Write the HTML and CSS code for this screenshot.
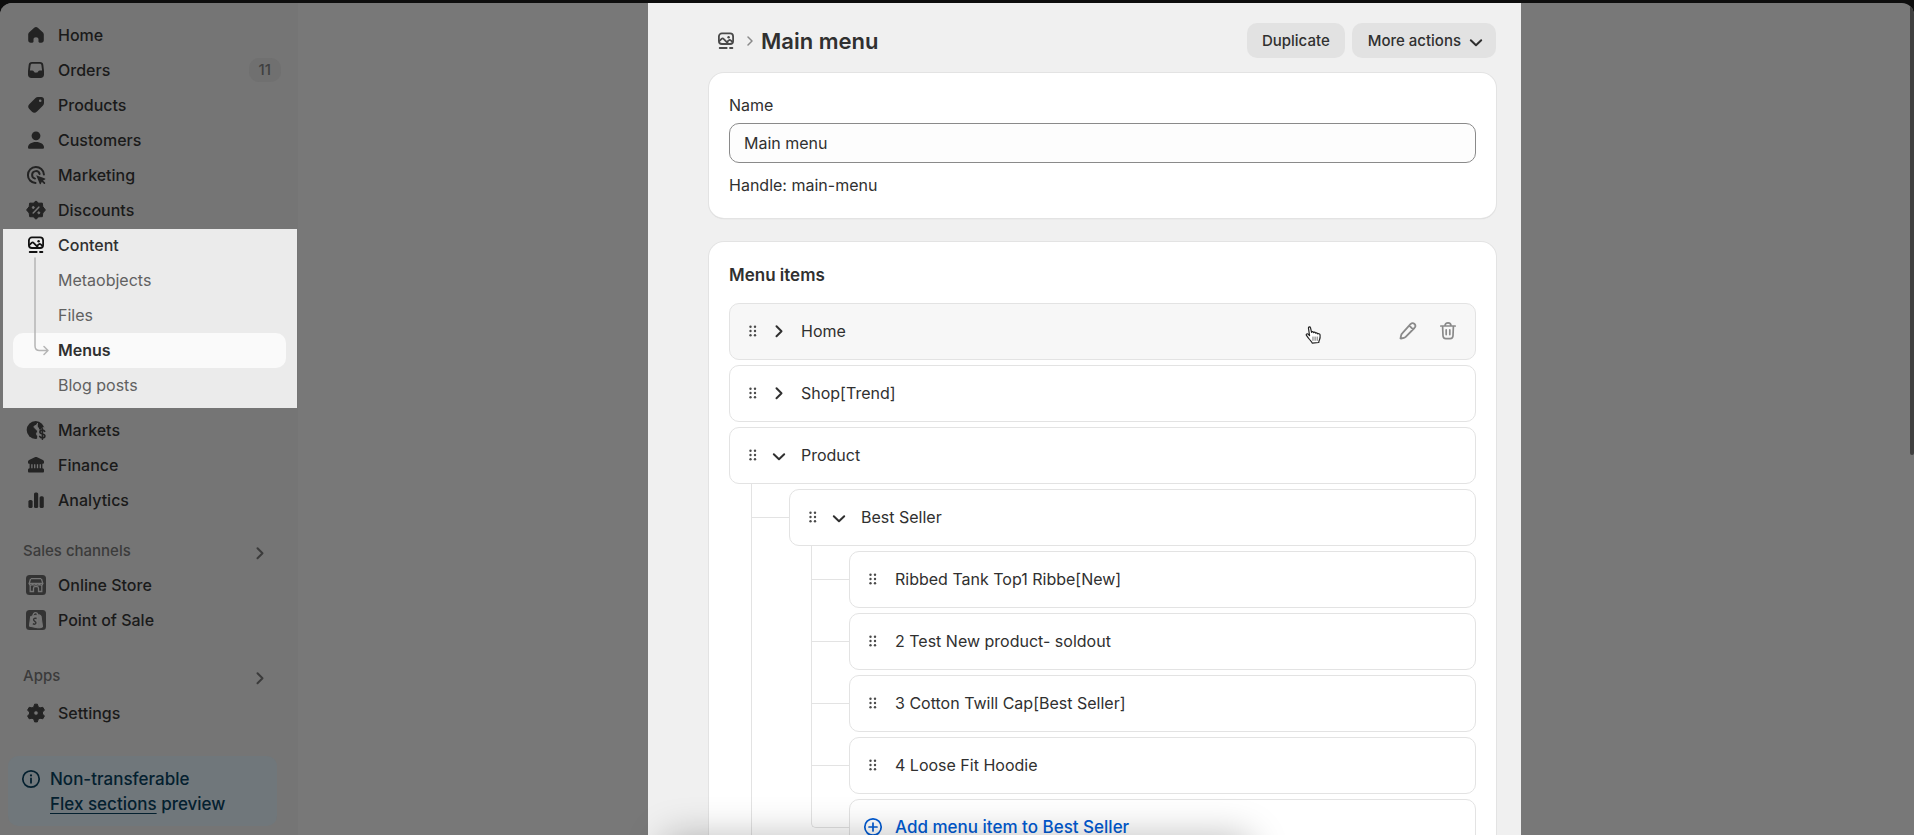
FILE: index.html
```html
<!DOCTYPE html>
<html lang="en">
<head>
  <meta charset="UTF-8">
  <meta name="viewport" content="width=device-width, initial-scale=1">
  <title>Main menu</title>
  <link rel="stylesheet" href="styles.css">
</head>
<body>
<svg class="sprite" aria-hidden="true">
  <symbol id="content" viewBox="0 0 20 20">
    <rect x="2.9" y="2.4" width="14.2" height="10.6" rx="3" fill="none" stroke="currentColor" stroke-width="1.8"/>
    <path d="M3 10.5l2.6-2.7c.6-.6 1.500-.6 2 0l4.600 4.800M10.800 11l2-1.600c.6-.5 1.300-.5 1.900 0l2 1.600" fill="none" stroke="currentColor" stroke-width="1.8"/>
    <circle cx="12.600" cy="6.300" r="1.200" fill="currentColor"/>
    <path d="M3.700 17h7M14 17h2.400" fill="none" stroke="currentColor" stroke-width="1.800" stroke-linecap="round"/>
  </symbol>
  <symbol id="drag" viewBox="0 0 20 20">
    <g fill="currentColor">
      <circle cx="7.500" cy="5.700" r="1.200"/><circle cx="12" cy="5.700" r="1.200"/>
      <circle cx="7.500" cy="10" r="1.200"/><circle cx="12" cy="10" r="1.200"/>
      <circle cx="7.500" cy="14.300" r="1.200"/><circle cx="12" cy="14.300" r="1.200"/>
    </g>
  </symbol>
  <symbol id="right" viewBox="0 0 20 20">
    <path d="M7.500 5.200l5 5-5 5" fill="none" stroke="currentColor" stroke-width="2" stroke-linecap="round" stroke-linejoin="round"/>
  </symbol>
  <symbol id="down" viewBox="0 0 20 20">
    <path d="M4.800 9.300l5.200 5 5.200-5" fill="none" stroke="currentColor" stroke-width="2" stroke-linecap="round" stroke-linejoin="round"/>
  </symbol>
</svg>

<div class="page">
  <aside class="sidebar">
    <nav>
      <a href="#" class="nav-link">
        <svg viewBox="0 0 20 20"><path d="M8.200 2.800c1-1 2.600-1 3.600 0l4.900 4.500c.8.7 1.100 1.500 1.100 2.500v5.400c0 1.600-1 2.500-2.500 2.500h-1.600c-.7 0-1.200-.5-1.200-1.200v-2.300c0-1.200-1-2-2.500-2s-2.500.8-2.500 2v2.300c0 .7-.5 1.200-1.200 1.200h-1.600c-1.500 0-2.500-.9-2.500-2.500V9.800c0-1 .3-1.800 1.100-2.500z" fill="currentColor"/></svg>
        <span>Home</span>
      </a>
      <a href="#" class="nav-link">
        <svg viewBox="0 0 20 20"><path fill-rule="evenodd" d="M6 2h8c2 0 3 1 3.300 2.800l.7 6.200v3.500c0 2.200-1.300 3.500-3.500 3.500h-9C3.300 18 2 16.700 2 14.500V11l.7-6.200C3 3 4 2 6 2zm.3 1.800c-1 0-1.600.5-1.700 1.500L3.900 10.500h2.300c.8 0 1.300.4 1.700 1 .4.800 1 1.200 2.100 1.200s1.700-.4 2.100-1.200c.4-.6.9-1 1.700-1h2.300l-.7-5.200c-.1-1-.7-1.500-1.700-1.500z" fill="currentColor"/></svg>
        <span>Orders</span>
        <span class="badge">11</span>
      </a>
      <a href="#" class="nav-link">
        <svg viewBox="0 0 20 20"><path fill-rule="evenodd" d="M12 2h3.200C17 2 18 3 18 4.800V8c0 1-.3 1.800-1 2.500l-6 6c-1.700 1.700-3.500 1.700-5 .2l-2.700-2.700c-1.500-1.500-1.500-3.300.2-5l6-6C10.200 2.300 11 2 12 2zm2.200 5a1.300 1.300 0 1 0 0-2.600 1.300 1.300 0 0 0 0 2.600z" fill="currentColor"/></svg>
        <span>Products</span>
      </a>
      <a href="#" class="nav-link">
        <svg viewBox="0 0 20 20"><g fill="currentColor"><circle cx="10" cy="5.800" r="4.400"/><path d="M10 12c4.600 0 8 2.400 8 5.400 0 .8-.6 1.300-1.400 1.300H3.400c-.8 0-1.400-.5-1.400-1.300C2 14.400 5.400 12 10 12z"/></g></svg>
        <span>Customers</span>
      </a>
      <a href="#" class="nav-link">
        <svg viewBox="0 0 20 20"><g fill="none" stroke="currentColor" stroke-width="2" stroke-linecap="round"><path d="M9.500 18A8 8 0 1 1 17.900 9.500"/><path d="M9 13.600A3.800 3.800 0 1 1 13.600 9"/></g><path d="M10.200 10.200l8.800 3.400c.5.200.5.800 0 1l-2 1 2 2c.4.400.4.800 0 1.200s-.8.400-1.200 0l-2-2-1 2.100c-.2.500-.9.500-1 0z" fill="currentColor"/></svg>
        <span>Marketing</span>
      </a>
      <a href="#" class="nav-link">
        <svg viewBox="0 0 20 20"><g fill="currentColor"><path d="M10 1l2.700 2.200 3.600-.1.500 3.500L19.400 10l-2.600 3 -.5 3.700-3.600.1L10 19.200l-2.700-2.400-3.600-.1-.5-3.700L.6 10l2.600-3.400.5-3.500 3.600.1z" stroke="currentColor" stroke-linejoin="round"/></g><g class="cutout"><path d="M7.200 13l5.600-5.800" stroke-width="1.600" stroke-linecap="round"/><circle cx="7.300" cy="7.500" r="1" /><circle cx="12.800" cy="12.800" r="1"/></g></svg>
        <span>Discounts</span>
      </a>

      <div class="nav-group">
        <a href="#" class="nav-link parent">
          <svg><use href="#content"/></svg>
          <span>Content</span>
        </a>
        <div class="subnav">
          <a href="#">Metaobjects</a>
          <a href="#">Files</a>
          <a href="#" class="current">Menus</a>
          <a href="#">Blog posts</a>
          <svg class="subnav-arrow" viewBox="0 0 16 100"><path d="M2 1v88c0 3 1.500 4.500 4.500 4.500H15M11 89.500l4 4-4 4" fill="none" stroke="currentColor" stroke-width="1.500" stroke-linecap="round" stroke-linejoin="round"/></svg>
        </div>
      </div>

      <a href="#" class="nav-link">
        <svg viewBox="0 0 20 20"><circle cx="9.600" cy="10" r="8.900" fill="currentColor"/><path class="cutout" d="M11.500 3.200c-.2 1.500-1 2-2.300 2.400-1.400.5-1.500 1.500-.7 2.200l2.600 2.600c.7.700.4 1.700-.2 2.300-.7.700-.5 1.500 0 2.200l.8 1.300v3.500l7.800-2V8.800l-2-1.500-2.800 2.600c-.6.500-1.300.3-1.700-.4l-1.700-3.200c-.3-.8-.2-1.800.2-3.100z"/><path d="M18.700 11.400c-.5-.9-1.300-1.300-2.300-1.300-1.500 0-2.500.7-2.500 1.900 0 2.800 5 1.200 5 4 0 1.200-1.100 1.900-2.500 1.900-1.200 0-2.200-.5-2.700-1.500M16.400 8.700v10.500" fill="none" stroke="currentColor" stroke-width="1.600" stroke-linecap="round"/></svg>
        <span>Markets</span>
      </a>
      <a href="#" class="nav-link">
        <svg viewBox="0 0 20 20"><path d="M8.800 2.300c.8-.4 1.600-.4 2.400 0l5.700 2.600c.7.300 1.100.9 1.100 1.600v1c0 .8-.5 1.300-1.300 1.300h-.3v4.400c1 .1 1.600.8 1.600 1.800v1.300c0 .8-.5 1.200-1.200 1.200H3.200c-.7 0-1.200-.4-1.200-1.200V15c0-1 .6-1.700 1.600-1.800V8.800h-.3C2.500 8.800 2 8.300 2 7.500v-1c0-.7.400-1.300 1.100-1.600z" fill="currentColor"/><path class="cutout" d="M5.900 9.200v4M8.700 9.200v4M11.500 9.200v4M14.300 9.200v4" stroke-width="1.300"/></svg>
        <span>Finance</span>
      </a>
      <a href="#" class="nav-link">
        <svg viewBox="0 0 20 20"><g fill="currentColor"><rect x="2.400" y="10" width="4.200" height="8" rx="1.600"/><rect x="8" y="2.400" width="4.200" height="15.600" rx="1.600"/><rect x="13.600" y="6.200" width="4.200" height="11.800" rx="1.600"/></g></svg>
        <span>Analytics</span>
      </a>

      <a href="#" class="nav-heading">
        <span>Sales channels</span>
        <svg><use href="#right"/></svg>
      </a>
      <a href="#" class="nav-link">
        <svg class="app-icon" viewBox="0 0 20 20"><rect x="0" y="0" width="20" height="20" rx="3.500" fill="currentColor"/><g class="cutout"><path d="M5 3.700h10M4.600 3.700L3.200 8.400h13.600l-1.400-4.700M3.200 8.400c0 2.300 3.400 2.300 3.400 0 0 2.300 3.400 2.300 3.400 0 0 2.300 3.400 2.300 3.400 0 0 2.300 3.400 2.300 3.400 0M4.200 10.500v6h3.300v-3.300c0-1 .5-1.500 1.500-1.500h2c1 0 1.500.5 1.500 1.500v3.300h3.300v-6" class="line"/></g></svg>
        <span>Online Store</span>
      </a>
      <a href="#" class="nav-link">
        <svg class="app-icon" viewBox="0 0 20 20"><rect x="0" y="0" width="20" height="20" rx="3.500" fill="currentColor"/><path class="cutout" d="M4.600 6.500l8-1.800V18L3.400 16.200zM13.400 4.700l1.600 1 1.600 11.300-3.200 1z"/><path class="cutout line" d="M6.800 6c.3-2 1.500-3.400 2.700-3.400S11.700 3.800 11.800 5.200"/><path d="M10.600 8.500c-1.600-.7-3 0-3 1.300 0 1.500 2.300 1.500 2.300 3s-1.700 1.800-3 .9" fill="none" stroke="currentColor" stroke-width="1.400"/></svg>
        <span>Point of Sale</span>
      </a>

      <a href="#" class="nav-heading apps">
        <span>Apps</span>
        <svg><use href="#right"/></svg>
      </a>
      <a href="#" class="nav-link settings">
        <svg viewBox="0 0 20 20"><path fill-rule="evenodd" d="M8.600 1.200h2.800l.8 2.700 1.800 1 2.800-.6 1.600 2.800-1.900 2v1.900l1.900 2-1.600 2.800-2.800-.6-1.800 1-.8 2.700H8.600l-.8-2.700-1.800-1-2.800.6L1.600 13l1.900-2V9.100l-1.900-2 1.600-2.800 2.800.6 1.800-1zM10 12.300a2.300 2.300 0 1 0 0-4.600 2.300 2.300 0 0 0 0 4.600z" fill="currentColor" stroke="currentColor" stroke-linejoin="round"/></svg>
        <span>Settings</span>
      </a>
    </nav>

    <div class="notice">
      <svg viewBox="0 0 20 20"><circle cx="10" cy="10" r="8.200" fill="none" stroke="currentColor" stroke-width="1.700"/><path d="M10 9.500v4.300" stroke="currentColor" stroke-width="1.800" stroke-linecap="round"/><circle cx="10" cy="6.400" r="1.100" fill="currentColor"/></svg>
      <p>Non-transferable<br><a href="#">Flex sections</a> preview</p>
    </div>
  </aside>

  <main class="main">
    <section class="panel">
      <header class="panel-head">
        <a href="#" class="crumb" aria-label="Content"><svg><use href="#content"/></svg></a>
        <svg class="crumb-sep" viewBox="0 0 8 12"><path d="M2 2l4 4-4 4" fill="none" stroke="currentColor" stroke-width="1.500" stroke-linecap="round" stroke-linejoin="round"/></svg>
        <h1>Main menu</h1>
        <button type="button" class="btn">Duplicate</button>
        <button type="button" class="btn">More actions <svg><use href="#down"/></svg></button>
      </header>

      <div class="card name-card">
        <label for="menu-name">Name</label>
        <input type="text" id="menu-name" value="Main menu">
        <p>Handle: main-menu</p>
      </div>

      <div class="card">
        <h2>Menu items</h2>
        <ul class="items">
          <li>
            <div class="row hover">
              <svg class="drag"><use href="#drag"/></svg>
              <button type="button" class="toggle" aria-label="Expand Home"><svg><use href="#right"/></svg></button>
              <span class="label">Home</span>
              <button type="button" class="action" aria-label="Edit"><svg viewBox="0 0 20 20"><path d="M12.500 3.200c1.300-1.300 2.900-1.300 4-.2s1.100 2.700-.1 4L7.700 15.800c-.5.500-1.100.9-1.800 1l-3 .7c-.3 0-.5-.2-.4-.5l.7-2.900c.1-.7.500-1.300 1-1.800zM11.300 4.600l4 4" fill="none" stroke="currentColor" stroke-width="1.800" stroke-linejoin="round"/></svg></button>
              <button type="button" class="action" aria-label="Delete"><svg viewBox="0 0 20 20"><path d="M2.800 5h14.400M7 5c0-1.900 1.200-3.200 3-3.200S13 3.100 13 5M4.600 5.200l.4 9.600c.1 1.800 1 2.800 2.800 2.800h4.400c1.800 0 2.700-1 2.800-2.800l.4-9.600M8.200 8.800v4.800M11.800 8.800v4.800" fill="none" stroke="currentColor" stroke-width="1.700" stroke-linecap="round"/></svg></button>
              <svg class="pointer" viewBox="0 0 16 17"><path d="M3.200 1.800c0-1.100 1.700-1.400 2 0l1 4.200c.2-.9 1.700-.9 1.900.3.300-.8 1.700-.7 1.900.5.400-.7 1.600-.4 1.800.6.600-.3 2.200-.3 2.400 1 .2 1.800.2 2.900-.5 4.600-.3.800-.7 1.200-.7 2.600l-6.200.5c-.4-1.400-1.600-2.200-2.700-3.600C3.200 11.400 1.800 9.500 1.200 8.600c-.4-1 .9-1.600 1.600-1l1.500 1.500z" fill="#fff" stroke="#222" stroke-width="1.100" stroke-linejoin="round"/><path d="M7.500 10v4M9.500 10v4M11.500 10v4" stroke="#555" stroke-width=".8"/></svg>
            </div>
          </li>
          <li>
            <div class="row">
              <svg class="drag"><use href="#drag"/></svg>
              <button type="button" class="toggle" aria-label="Expand Shop"><svg><use href="#right"/></svg></button>
              <span class="label">Shop[Trend]</span>
            </div>
          </li>
          <li>
            <div class="row">
              <svg class="drag"><use href="#drag"/></svg>
              <button type="button" class="toggle" aria-label="Collapse Product"><svg><use href="#down"/></svg></button>
              <span class="label">Product</span>
            </div>
            <ul class="tree">
              <li>
                <div class="node">
                  <div class="row">
                    <svg class="drag"><use href="#drag"/></svg>
                    <button type="button" class="toggle" aria-label="Collapse Best Seller"><svg><use href="#down"/></svg></button>
                    <span class="label">Best Seller</span>
                  </div>
                  <ul class="tree">
                    <li><div class="node"><div class="row"><svg class="drag"><use href="#drag"/></svg><span class="label">Ribbed Tank Top1 Ribbe[New]</span></div></div></li>
                    <li><div class="node"><div class="row"><svg class="drag"><use href="#drag"/></svg><span class="label">2 Test New product- soldout</span></div></div></li>
                    <li><div class="node"><div class="row"><svg class="drag"><use href="#drag"/></svg><span class="label">3 Cotton Twill Cap[Best Seller]</span></div></div></li>
                    <li><div class="node"><div class="row"><svg class="drag"><use href="#drag"/></svg><span class="label">4 Loose Fit Hoodie</span></div></div></li>
                    <li class="last">
                      <div class="node">
                        <button type="button" class="row add">
                          <svg viewBox="0 0 20 20"><g fill="none" stroke="currentColor" stroke-width="1.700" stroke-linecap="round"><circle cx="10" cy="10" r="8.200"/><path d="M10 6v8M6 10h8"/></g></svg>
                          <span class="label">Add menu item to Best Seller</span>
                        </button>
                      </div>
                    </li>
                  </ul>
                </div>
              </li>
            </ul>
          </li>
        </ul>
      </div>
    </section>
  </main>
  <div class="bar-shadow"></div>
  <div class="scrollbar"></div>
</div>
</body>
</html>
```

FILE: styles.css
```css
* {
  margin: 0;
  padding: 0;
  box-sizing: border-box;
}

body {
  height: 100vh;
  padding-top: 3px;
  overflow: hidden;
  background: #0e0e0e;
  font-family: Inter, "Liberation Sans", sans-serif;
  font-size: 16px;
  line-height: 24px;
  color: #303030;
}

a {
  color: inherit;
  text-decoration: none;
}

li {
  list-style: none;
}

button,
input {
  font: inherit;
  color: inherit;
}

button {
  border: none;
  background: none;
}

svg {
  width: 20px;
  height: 20px;
  flex: none;
  display: block;
}

.sprite {
  position: absolute;
  width: 0;
  height: 0;
}

.page {
  display: flex;
  height: 100%;
  position: relative;
  overflow: hidden;
  border-radius: 12px 12px 0 0;
  background: #787878;
}

/* sidebar */
.sidebar {
  width: 298px;
  flex: none;
  padding-top: 14px;
  background: #757575;
  color: #1a1a1a;
  font-weight: 500;
}

.nav-link {
  display: flex;
  align-items: center;
  gap: 12px;
  height: 35px;
  padding: 0 17px 0 26px;
}

.nav-link svg {
  color: #232323;
}

.cutout {
  fill: #757575;
  stroke: #757575;
}

.cutout.line,
.cutout .line {
  fill: none;
  stroke-width: 1.3;
}

.nav-link .app-icon {
  color: #333;
}

.badge {
  margin-left: auto;
  padding: 0 10px;
  border-radius: 10px;
  background: #707070;
  color: #404040;
  font-size: 15px;
}

.nav-group {
  margin: 2px 1px 4px 3px;
  padding-bottom: 5px;
  background: #ebebeb;
  color: #303030;
}

.nav-group .parent {
  height: 32px;
  padding-left: 23px;
}

.nav-group .parent svg {
  color: #111;
}

.subnav {
  position: relative;
  padding: 2px 11px 0 10px;
}

.subnav a {
  display: block;
  height: 35px;
  padding-left: 45px;
  border-radius: 10px;
  line-height: 35px;
  font-weight: 400;
  color: #616161;
}

.subnav .current {
  background: #fafafa;
  color: #303030;
  font-weight: 600;
}

.subnav-arrow {
  position: absolute;
  top: -4px;
  left: 30px;
  width: 16px;
  height: 100px;
  color: #b5b5b5;
}

.nav-heading {
  display: flex;
  align-items: center;
  justify-content: space-between;
  height: 32px;
  margin-top: 18px;
  padding: 0 28px 0 23px;
  color: #3b3b3b;
  font-size: 15px;
}

.nav-heading svg {
  margin-top: 3px;
}

.nav-heading.apps {
  margin-top: 23px;
}

.settings {
  margin-top: 3px;
}

.notice {
  display: flex;
  gap: 9px;
  margin: 26px 21px 0 8px;
  padding: 11px 13px 9px;
  border-radius: 10px;
  background: #70777b;
  color: #04202f;
  font-size: 17px;
  line-height: 25px;
}

.notice svg {
  margin-top: 2px;
}

.notice a {
  text-decoration: underline;
  text-underline-offset: 3px;
}

/* main column */
.main {
  display: flex;
  flex: 1;
  justify-content: center;
  min-width: 0;
  padding-right: 43px;
}

.panel {
  width: 100%;
  max-width: 873px;
  padding: 20px 25px 0 61px;
  background: #f0f0f0;
}

.panel-head {
  display: flex;
  align-items: center;
  height: 35px;
  margin-bottom: 15px;
  padding-left: 7px;
}

.crumb {
  color: #4a4a4a;
}

.crumb-sep {
  width: 8px;
  height: 12px;
  margin: 0 7px 0 10px;
  color: #8a8a8a;
}

h1 {
  flex: 1;
  font-size: 22px;
  line-height: 30px;
  font-weight: 600;
}

.btn {
  display: flex;
  align-items: center;
  gap: 5px;
  height: 35px;
  margin-left: 7px;
  padding: 0 15px;
  border-radius: 10px;
  background: #e2e2e2;
  font-size: 15px;
  font-weight: 500;
}

.btn:last-child {
  padding: 0 10px 0 16px;
}

.card {
  margin-bottom: 24px;
  padding: 21px 20px;
  border-radius: 15px;
  background: #fff;
  box-shadow: 0 0 0 1px #e3e3e3, 0 1px 1px #c4c4c4;
}

.name-card {
  padding-top: 20px;
}

.name-card label {
  display: block;
  margin-bottom: 6px;
}

.name-card input {
  display: block;
  width: 100%;
  height: 40px;
  margin-bottom: 10px;
  padding: 0 14px;
  border: 1px solid #8a8a8a;
  border-radius: 10px;
  background: #fdfdfd;
}

h2 {
  margin-bottom: 16px;
  font-size: 17px;
  line-height: 24px;
  font-weight: 600;
}

/* menu tree */
.items > li {
  margin-bottom: 5px;
}

.row {
  display: flex;
  align-items: center;
  position: relative;
  width: 100%;
  height: 57px;
  padding: 0 17px 2px 13px;
  border: 1px solid #e3e3e3;
  border-radius: 10px;
  background: #fff;
}

.row.hover {
  background: #f7f7f7;
}

.drag {
  color: #4a4a4a;
}

.drag + .label,
.add .label {
  margin-left: 12px;
}

.toggle {
  margin: 0 12px 0 6px;
}

.label {
  flex: 1;
  text-align: left;
}

.action {
  margin-left: 20px;
  color: #8a8a8a;
}

.pointer {
  position: absolute;
  top: 22px;
  right: 153px;
  width: 17px;
  height: 18px;
}

.tree {
  margin-left: 22px;
}

.tree li {
  display: flex;
  border-left: 1px solid #e3e3e3;
}

.tree li::before {
  content: "";
  width: 37px;
  height: 33px;
  border-bottom: 1px solid #e3e3e3;
}

.tree li.last {
  border-left: none;
}

.tree li.last::before {
  border-left: 1px solid #e3e3e3;
  border-bottom-left-radius: 5px;
}

.node {
  flex: 1;
  padding-top: 5px;
}

.items > li > .tree {
  padding-bottom: 60px;
}

.add {
  color: #005bd3;
  font-size: 17px;
  font-weight: 500;
}

/* shade from the toolbar docked under the window */
.bar-shadow {
  position: absolute;
  top: 100%;
  left: 50%;
  width: 590px;
  height: 60px;
  margin-left: -295px;
  border-radius: 15px;
  box-shadow: 0 0 36px rgba(0, 0, 0, .25);
}

.scrollbar {
  position: absolute;
  top: 3px;
  right: 0;
  width: 4px;
  height: 449px;
  border-radius: 3px;
  background: #404040;
}
```
